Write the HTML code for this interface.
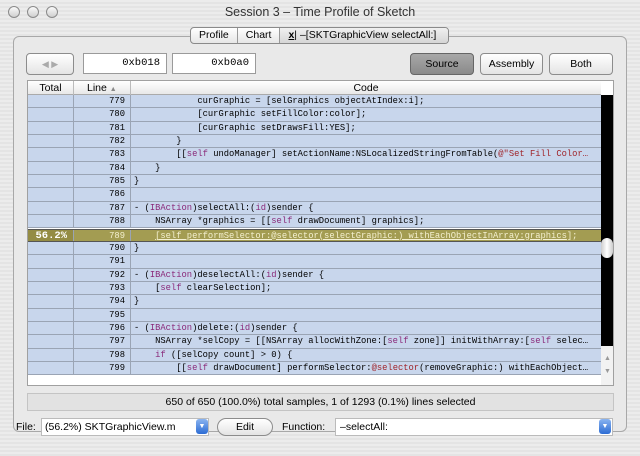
<!DOCTYPE html>
<html><head><style>
*{margin:0;padding:0;box-sizing:border-box}
body{width:640px;height:456px;overflow:hidden;font-family:"Liberation Sans",sans-serif;font-size:10.5px;color:#000;
background:repeating-linear-gradient(#ececec 0 2px,#e4e4e4 2px 4px);position:relative}
.abs{position:absolute}
.title{left:0;top:0;width:640px;height:22px;text-align:center;font-size:12.5px;line-height:24px;color:#333}
.light{width:12px;height:12px;border-radius:50%;border:1px solid #8a8a8a;background:linear-gradient(#fafafa,#cfcfcf);top:6px}
.panel{left:13px;top:36px;width:614px;height:396px;border:1px solid #a8a8a8;border-radius:6px;background:#e9e9e9}
.tabs{left:190px;top:27px;height:17px;display:flex;border:1px solid #8a8a8a;border-radius:4px;background:linear-gradient(#fff,#e6e6e6);font-size:10.5px;line-height:15px;overflow:hidden}
.tabs div{padding:0 8px;border-right:1px solid #999}
.tabs div:last-child{border-right:none;background:linear-gradient(#f0f0f0,#d6d6d6);padding-right:12px}
.field{background:#fff;border:1px solid #9a9a9a;height:21px;font-family:"Liberation Mono",monospace;font-size:10.5px;line-height:19px;text-align:right;padding-right:6px}
.btn{height:22px;border:1px solid #8c8c8c;border-radius:4px;background:linear-gradient(#fff,#e4e4e4);text-align:center;line-height:20px;font-size:10.5px}
.table{left:27px;top:80px;width:587px;height:306px;background:#fff;border:1px solid #a0a0a0;overflow:hidden}
.hdr{left:0;top:0;height:14px;width:573px;background:linear-gradient(#fff,#e8e8e8);border-bottom:1px solid #aaa;font-size:10.5px;line-height:14px}
.row{position:absolute;left:0;width:573px;height:13.35px;background:#c8d6ec;border-bottom:1px solid #9aa4b4;font-family:"Liberation Mono",monospace;font-size:8.8px;line-height:12.5px;white-space:pre;overflow:hidden}
.c1{position:absolute;left:0;width:46px;height:100%;border-right:1px solid #9aa4b4;text-align:right;padding-right:6px}
.c2{position:absolute;left:46px;width:57px;height:100%;border-right:1px solid #9aa4b4;text-align:right;padding-right:5px}
.c3{position:absolute;left:106px;height:100%}
.k{color:#8a2a7a}.s{color:#a0262c}
.hl{background:#a39c52;color:#f4f0d0}
.hl .c1{background:#948c44;color:#fff;font-size:10.5px;font-weight:bold}
.hl .c3 span{text-decoration:underline}
.sb{left:573px;top:14px;width:13px;height:270px;background:#000}
</style></head><body>
<div class="abs title">Session 3 – Time Profile of Sketch</div>
<div class="abs light" style="left:8px"></div><div class="abs light" style="left:27px"></div><div class="abs light" style="left:46px"></div>
<div class="abs panel"></div>
<div class="abs tabs"><div>Profile</div><div>Chart</div><div><b style="text-decoration:underline">x</b>| –[SKTGraphicView selectAll:]</div></div>
<div class="abs btn" style="left:26px;top:53px;width:48px;color:#aaa;font-size:9px">◀ ▶</div>
<div class="abs field" style="left:83px;top:53px;width:84px">0xb018</div>
<div class="abs field" style="left:172px;top:53px;width:84px">0xb0a0</div>
<div class="abs btn" style="left:410px;top:53px;width:64px;background:linear-gradient(#a8a8a8,#8a8a8a);border-color:#666">Source</div>
<div class="abs btn" style="left:480px;top:53px;width:63px">Assembly</div>
<div class="abs btn" style="left:549px;top:53px;width:64px">Both</div>
<div class="abs table">
<div class="abs hdr"><span class="abs" style="left:0;width:46px;text-align:center;border-right:1px solid #bbb;height:14px">Total</span><span class="abs" style="left:46px;width:57px;border-right:1px solid #bbb;height:14px;padding-left:13px">Line <span style="font-size:7px;color:#888">▲</span></span><span class="abs" style="left:103px;width:470px;text-align:center">Code</span></div>
<div class="abs sb"></div>
<div class="abs" style="left:573px;top:157px;width:12px;height:20px;border-radius:6px;background:linear-gradient(90deg,#ccc,#fff,#ccc)"></div>
<div class="abs" style="left:573px;top:265px;width:13px;height:40px;background:#f2f2f2;color:#999;font-size:7px;text-align:center;line-height:13px;padding-top:6px">▲<br>▼</div>
<div class="row" style="top:14px"><div class="c1"></div><div class="c2">779</div><div class="c3">            curGraphic = [selGraphics objectAtIndex:i];</div></div>
<div class="row" style="top:27.35px"><div class="c1"></div><div class="c2">780</div><div class="c3">            [curGraphic setFillColor:color];</div></div>
<div class="row" style="top:40.7px"><div class="c1"></div><div class="c2">781</div><div class="c3">            [curGraphic setDrawsFill:YES];</div></div>
<div class="row" style="top:54.05px"><div class="c1"></div><div class="c2">782</div><div class="c3">        }</div></div>
<div class="row" style="top:67.4px"><div class="c1"></div><div class="c2">783</div><div class="c3">        [[<span class="k">self</span> undoManager] setActionName:NSLocalizedStringFromTable(<span class="s">@"Set Fill Color…</span></div></div>
<div class="row" style="top:80.75px"><div class="c1"></div><div class="c2">784</div><div class="c3">    }</div></div>
<div class="row" style="top:94.1px"><div class="c1"></div><div class="c2">785</div><div class="c3">}</div></div>
<div class="row" style="top:107.45px"><div class="c1"></div><div class="c2">786</div><div class="c3"></div></div>
<div class="row" style="top:120.8px"><div class="c1"></div><div class="c2">787</div><div class="c3">- (<span class="k">IBAction</span>)selectAll:(<span class="k">id</span>)sender {</div></div>
<div class="row" style="top:134.15px"><div class="c1"></div><div class="c2">788</div><div class="c3">    NSArray *graphics = [[<span class="k">self</span> drawDocument] graphics];</div></div>
<div class="row hl" style="top:147.5px;border-top:1px solid #555;border-bottom:1px solid #555"><div class="c1">56.2%</div><div class="c2">789</div><div class="c3">    <span>[self performSelector:@selector(selectGraphic:) withEachObjectInArray:graphics</span>];</div></div>
<div class="row" style="top:160.85px"><div class="c1"></div><div class="c2">790</div><div class="c3">}</div></div>
<div class="row" style="top:174.2px"><div class="c1"></div><div class="c2">791</div><div class="c3"></div></div>
<div class="row" style="top:187.55px"><div class="c1"></div><div class="c2">792</div><div class="c3">- (<span class="k">IBAction</span>)deselectAll:(<span class="k">id</span>)sender {</div></div>
<div class="row" style="top:200.9px"><div class="c1"></div><div class="c2">793</div><div class="c3">    [<span class="k">self</span> clearSelection];</div></div>
<div class="row" style="top:214.25px"><div class="c1"></div><div class="c2">794</div><div class="c3">}</div></div>
<div class="row" style="top:227.6px"><div class="c1"></div><div class="c2">795</div><div class="c3"></div></div>
<div class="row" style="top:240.95px"><div class="c1"></div><div class="c2">796</div><div class="c3">- (<span class="k">IBAction</span>)delete:(<span class="k">id</span>)sender {</div></div>
<div class="row" style="top:254.3px"><div class="c1"></div><div class="c2">797</div><div class="c3">    NSArray *selCopy = [[NSArray allocWithZone:[<span class="k">self</span> zone]] initWithArray:[<span class="k">self</span> selec…</div></div>
<div class="row" style="top:267.65px"><div class="c1"></div><div class="c2">798</div><div class="c3">    <span class="k">if</span> ([selCopy count] &gt; 0) {</div></div>
<div class="row" style="top:281px"><div class="c1"></div><div class="c2">799</div><div class="c3">        [[<span class="k">self</span> drawDocument] performSelector:<span class="s">@selector</span>(removeGraphic:) withEachObject…</div></div>
</div>
<div class="abs" style="left:27px;top:393px;width:587px;height:18px;border:1px solid #c4c4c4;background:#e2e2e2;text-align:center;line-height:17px;font-size:10.5px">650 of 650 (100.0%) total samples, 1 of 1293 (0.1%) lines selected</div>
<div class="abs" style="left:16px;top:421px">File:</div>
<div class="abs" style="left:41px;top:418px;width:168px;height:18px;background:#fff;border:1px solid #bbb;line-height:16px;padding-left:3px">(56.2%) SKTGraphicView.m</div>
<div class="abs" style="left:196px;top:419px;width:12px;height:15px;border-radius:3px;background:linear-gradient(#8ab4f0,#2c6cd4);color:#fff;font-size:7px;text-align:center;line-height:15px">▼</div>
<div class="abs btn" style="left:217px;top:418px;width:56px;height:18px;border-radius:9px;line-height:16px">Edit</div>
<div class="abs" style="left:282px;top:421px">Function:</div>
<div class="abs" style="left:335px;top:418px;width:278px;height:18px;background:#fff;border:1px solid #bbb;line-height:16px;padding-left:4px">–selectAll:</div>
<div class="abs" style="left:599px;top:419px;width:12px;height:15px;border-radius:3px;background:linear-gradient(#8ab4f0,#2c6cd4);color:#fff;font-size:7px;text-align:center;line-height:15px">▼</div>
</body></html>
